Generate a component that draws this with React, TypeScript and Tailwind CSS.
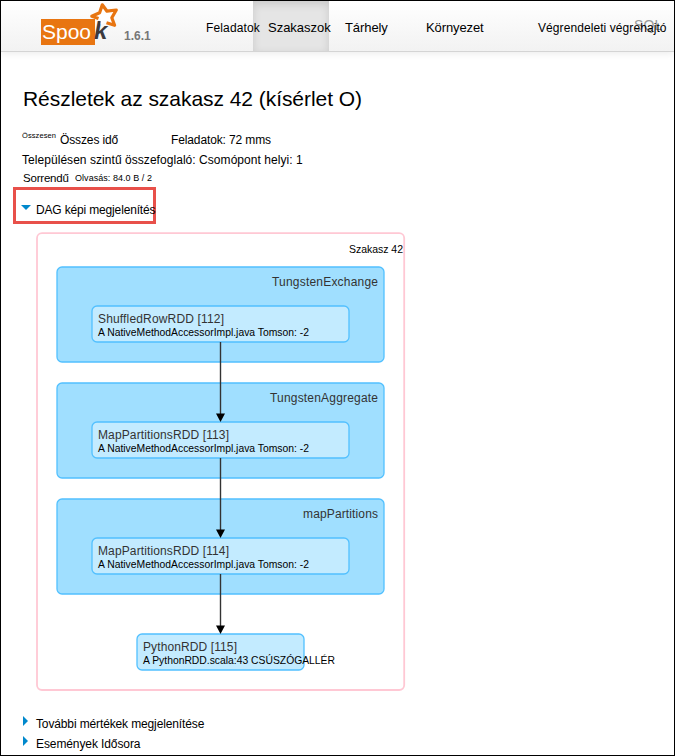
import React from "react";

const FONT = "font-['Liberation_Sans',Arial,sans-serif]";

type NodeProps = {
  x: number;
  y: number;
  w: number;
  title: string;
  titleWidth: number;
  sub: string;
  subWidth: number;
};

function DagNode({ x, y, w, title, titleWidth, sub, subWidth }: NodeProps) {
  return (
    <g>
      <rect x={x} y={y} width={w} height={36} rx={5} fill="#c3ebff" stroke="#52c0ff" strokeWidth={1.3} />
      <text x={x + 6} y={y + 17} fontSize={12} fill="#333" textLength={titleWidth}>{title}</text>
      <text x={x + 6} y={y + 30} fontSize={10.5} fill="#000" textLength={subWidth} lengthAdjust="spacingAndGlyphs">{sub}</text>
    </g>
  );
}

function Cluster({ y, label, width }: { y: number; label: string; width: number }) {
  return (
    <g>
      <rect x={57} y={y} width={327} height={95} rx={5} fill="#a0dfff" stroke="#52c0ff" strokeWidth={1.3} />
      <text x={378 - width} y={y + 19} fontSize={12} fill="#333" textLength={width}>{label}</text>
    </g>
  );
}

function Arrow({ from, to }: { from: number; to: number }) {
  return (
    <g>
      <path d={`M220.5 ${from}V${to - 6}`} stroke="#333" strokeWidth={1.4} />
      <path d={`M216 ${to - 8.5}H225L220.5 ${to}Z`} fill="#000" />
    </g>
  );
}

function Dag() {
  const impl = "A NativeMethodAccessorImpl.java Tomson: -2";
  return (
    <svg className="block" width={373} height={463} viewBox="34 230 373 463">
      <rect x={37} y={233.2} width={367.2} height={456.8} rx={5} fill="#fff" stroke="#ffc8d4" strokeWidth={1.8} />
      <text x={349} y={253} fontSize={10.5} fill="#000" textLength={54}>Szakasz 42</text>
      <Cluster y={267} label="TungstenExchange" width={106} />
      <Cluster y={383} label="TungstenAggregate" width={108} />
      <Cluster y={499} label="mapPartitions" width={75} />
      <DagNode x={92} y={306} w={257} title="ShuffledRowRDD [112]" titleWidth={126} sub={impl} subWidth={211} />
      <DagNode x={92} y={422} w={257} title="MapPartitionsRDD [113]" titleWidth={131} sub={impl} subWidth={211} />
      <DagNode x={92} y={538} w={257} title="MapPartitionsRDD [114]" titleWidth={131} sub={impl} subWidth={211} />
      <DagNode x={137} y={634} w={167} title="PythonRDD [115]" titleWidth={94} sub="A PythonRDD.scala:43 CSÚSZÓGALLÉR" subWidth={192} />
      <Arrow from={342} to={422} />
      <Arrow from={458} to={538} />
      <Arrow from={574} to={634} />
    </svg>
  );
}

function Header() {
  return (
    <header className="relative flex h-[51px] shrink-0 border-b border-[#d4d4d4] bg-linear-to-b from-white to-[#f2f2f2] shadow-[0_1px_8px_rgba(0,0,0,0.09)]">
      <div className="relative ml-10 mt-[18px] h-[26px] w-[54px] bg-[#e87511] text-[21px] leading-[25px] text-white">
        <span className="pl-px">Spoo</span>
        <span className="absolute left-[53px] top-[-1px] text-[24px] font-bold italic leading-[25px] text-[#3c3a3e]">k</span>
        <svg className="absolute left-[48px] top-[-18px]" width={32} height={30} viewBox="89 1 32 30">
          <path d="M102.3 4.8L107 11.2L116.3 10L111.8 17.8L114.6 25.3L106 22.6L100.6 24.5L100.6 18.8L91.8 16L99.6 12.8Z" fill="#fff" />
          <path d="M98.5 18.6L91.8 16.2L99.6 12.8L102.3 4.8L107 11.2L116.3 10L111.8 17.8L114.6 25.3L106.5 22.8" fill="none" stroke="#e87511" strokeWidth={3.2} strokeLinejoin="round" />
        </svg>
      </div>
      <span className="ml-[29px] mt-[27px] w-[82px] text-[12px] font-bold leading-4 text-[#777]">1.6.1</span>
      <nav className="flex whitespace-nowrap text-[13px] leading-[50px] text-black">
        <a className="relative z-10 mt-[2px] w-[47px] text-[12px] leading-[50px] tracking-[0.14px]">Feladatok</a>
        <a className="w-[76px] bg-[#e5e5e5] pl-[15px] leading-[53px] tracking-[-0.02px] shadow-[inset_0_3px_8px_rgba(0,0,0,0.125)]">Szakaszok</a>
        <a className="w-[97px] pl-4 leading-[53px] tracking-[-0.08px]">Tárhely</a>
        <a className="w-[112px] leading-[53px] tracking-[-0.1px]">Környezet</a>
        <a className="relative mt-[2px] text-[12px] leading-[50px] tracking-[0.08px]">
          <span className="absolute left-[96px] top-[-3px] text-[14px] leading-[50px] text-[#999]">SQL</span>
          <span className="relative">Végrendeleti végrehajtó</span>
        </a>
      </nav>
    </header>
  );
}

export default function App() {
  return (
    <div className={`flex h-[756px] w-[675px] flex-col overflow-hidden border border-black bg-white text-[12px] leading-4 text-black ${FONT}`}>
      <Header />
      <main className="whitespace-nowrap">
        <h1 className="ml-[22px] mt-[35px] h-6 text-[21px] leading-6 tracking-[-0.05px]">Részletek az szakasz 42 (kísérlet O)</h1>
        <div className="ml-[21px] mt-[21px] flex h-4">
          <span className="mt-[-4px] w-[38px] text-[7.5px] tracking-[0.08px]">Összesen</span>
          <span className="w-[111px] tracking-[-0.12px]">Összes idő</span>
          <span className="tracking-[-0.12px]">Feladatok: 72 mms</span>
        </div>
        <p className="ml-[21px] mt-1 h-4 tracking-[0.05px]">Településen szintű összefoglaló: Csomópont helyi: 1</p>
        <div className="ml-[22px] mt-[2px] flex h-4">
          <span className="w-[52px] text-[11.5px] tracking-[-0.2px]">Sorrendű</span>
          <span className="text-[9px] tracking-[0.05px]">Olvasás: 84.0 B / 2</span>
        </div>
        <div className="ml-3 mt-px flex h-[37px] w-[143px] border-3 border-[#e8504a] pl-[5px] pt-3">
          <svg className="mt-[3px] shrink-0" width={10} height={5} viewBox="0 0 10 5"><path d="M0 0H10L5 5Z" fill="#0088cc" /></svg>
          <span className="ml-[5px] tracking-[-0.16px]">DAG képi megjelenítés</span>
        </div>
        <div className="ml-[33px] mt-[6px]"><Dag /></div>
        <div className="ml-[22px] mt-[22px] flex h-5">
          <svg className="mt-px shrink-0" width={5} height={10} viewBox="0 0 5 10"><path d="M0 0V10L5 5Z" fill="#0088cc" /></svg>
          <span className="ml-2 mt-px tracking-[-0.13px]">További mértékek megjelenítése</span>
        </div>
        <div className="ml-[22px] flex h-5">
          <svg className="mt-px shrink-0" width={5} height={10} viewBox="0 0 5 10"><path d="M0 0V10L5 5Z" fill="#0088cc" /></svg>
          <span className="ml-2 mt-px tracking-[-0.1px]">Események Idősora</span>
        </div>
      </main>
    </div>
  );
}
